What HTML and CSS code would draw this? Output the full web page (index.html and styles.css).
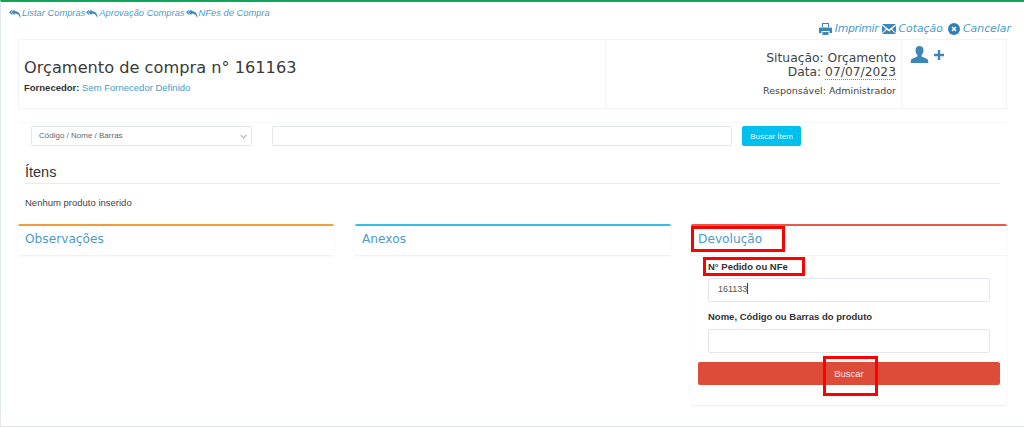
FILE: index.html
```html
<!DOCTYPE html>
<html lang="pt">
<head>
<meta charset="utf-8">
<title>Orçamento de compra</title>
<link rel="stylesheet" href="styles.css">
</head>
<body>
<svg class="defs" width="0" height="0" aria-hidden="true">
  <symbol id="reply" viewBox="0 0 13 10"><path fill="currentColor" d="M3.500 0 0 3.200l3.500 3.200V5L1.900 3.200 3.500 1.500z"/><path fill="currentColor" d="M6 0 2.400 3.200 6 6.400V4.500c3 0 5 1.300 6.500 5 .3-4.500-2-7.200-6.500-7.700z"/></symbol>
</svg>
<div class="page">
  <div class="topbar">
    <nav class="crumbs">
      <a><svg class="ico-reply"><use href="#reply"/></svg>Listar Compras</a>
      <a><svg class="ico-reply"><use href="#reply"/></svg>Aprovação Compras</a>
      <a><svg class="ico-reply"><use href="#reply"/></svg>NFes de Compra</a>
    </nav>
    <div class="actions">
      <a class="print-link"><svg class="ico-act ico-print" viewBox="0 0 13 12"><path fill="currentColor" fill-rule="evenodd" d="M3 0h7v4H9V1H4v3H3zM1 4.500h11a1 1 0 0 1 1 1V10h-2.500V8h-8v2H0V5.500a1 1 0 0 1 1-1z"/><path fill="currentColor" d="M3.500 9h6v3h-6z"/></svg>Imprimir</a>
      <a><svg class="ico-act ico-mail" viewBox="0 0 14 10"><path fill="currentColor" d="M0 0h14L7 5.500zM0 1.500 4 5 0 9zM14 1.500V9l-4-4zM4.800 5.700 7 7.400l2.200-1.700L14 10H0z"/></svg>Cotação</a>
      <a><svg class="ico-act ico-x" viewBox="0 0 12 12"><circle cx="6" cy="6" r="6" fill="#2f7fb5"/><path d="M4 4l4 4M8 4l-4 4" stroke="#fff" stroke-width="1.500"/></svg>Cancelar</a>
    </div>
  </div>

  <section class="head-box">
    <div class="head-main">
      <h1>Orçamento de compra n° 161163</h1>
      <p class="supplier"><b>Fornecedor:</b> <a>Sem Fornecedor Definido</a></p>
    </div>
    <div class="head-status">
      <div class="status-line">Situação: Orçamento</div>
      <div class="status-line">Data: <span class="dotted">07/07/2023</span></div>
      <div class="resp">Responsável: Administrador</div>
    </div>
    <div class="head-user">
      <svg class="ico-user" viewBox="0 0 18 17"><path fill="currentColor" d="M9 0c2.600 0 4 1.900 4 4.300 0 2-.8 3.600-1.800 4.700-.4.500-.3 1.500.4 1.800 2.300.9 5.400 1.800 5.900 3.200.2.800.2 1.800.2 3H.3c0-1.200 0-2.200.2-3 .5-1.400 3.600-2.300 5.900-3.200.7-.3.800-1.300.4-1.800C5.800 7.900 5 6.300 5 4.300 5 1.900 6.400 0 9 0z"/></svg>
      <svg class="ico-plus" viewBox="0 0 10 10"><path fill="currentColor" d="M3.800 0h2.400v3.800H10v2.400H6.200V10H3.800V6.200H0V3.800h3.800z"/></svg>
    </div>
  </section>

  <div class="search-row">
    <div class="select">Código / Nome / Barras<svg class="chev" viewBox="0 0 10 6"><path d="M1 1l4 4 4-4" fill="none" stroke="#777" stroke-width="1.300"/></svg></div>
    <div class="input search-input"></div>
    <button class="btn-info">Buscar Ítem</button>
  </div>

  <section class="items">
    <h2>Ítens</h2>
    <p>Nenhum produto inserido</p>
  </section>

  <div class="panels">
    <section class="panel orange"><h3>Observações</h3></section>
    <section class="panel cyan"><h3>Anexos</h3></section>
    <section class="panel red">
      <h3>Devolução</h3>
      <div class="panel-body">
        <label>N° Pedido ou NFe</label>
        <div class="input field">161133<span class="caret"></span></div>
        <label class="second">Nome, Código ou Barras do produto</label>
        <div class="input field"></div>
        <button class="btn-danger">Buscar</button>
      </div>
    </section>
  </div>

  <i class="mark mark-title"></i>
  <i class="mark mark-label"></i>
  <i class="mark mark-btn"></i>
</div>
</body>
</html>
```

FILE: styles.css
```css
* { box-sizing: border-box; }
html, body { margin: 0; padding: 0; background: #fff; }
body { font-family: "Liberation Sans", Arial, sans-serif; color: #333; }
.defs { position: absolute; }
a { color: #4b9bc9; }

.page {
  position: relative;
  width: 1024px;
  height: 427px;
  overflow: hidden;
  border-top: 2px solid #0ea65a;
  border-left: 1px solid #e3e8ef;
  border-bottom: 1px solid #dfe3ea;
  padding: 0 17px 0 17px;
}

.topbar { height: 37px; position: relative; }
.crumbs {
  position: absolute;
  left: -9px;
  top: 5px;
  display: flex;
  gap: 1px;
  font-size: 9.350px;
  font-style: italic;
  line-height: 13px;
}
.crumbs a { display: flex; align-items: center; }
.ico-reply { width: 12px; height: 10px; margin-right: 1px; color: #3f87b8; }
.actions {
  position: absolute;
  right: -4px;
  top: 19px;
  display: flex;
  gap: 4px;
  font-family: "DejaVu Sans", sans-serif;
  font-size: 10.900px;
  font-style: italic;
  line-height: 16px;
}
.actions a { display: flex; align-items: center; }
.actions .print-link { letter-spacing: -.35px; }
.ico-act { margin-right: 3px; color: #3c86b8; }
.ico-print { width: 13px; height: 12px; }
.ico-mail { width: 14px; height: 10px; margin-right: 2px; }
.ico-x { width: 12px; height: 12px; margin-left: 1px; }

.head-box {
  display: flex;
  height: 70px;
  width: 989px;
  border: 1px solid #f3f4f6;
}
.head-main { width: 587px; padding: 17px 5px 0 5px; border-right: 1px solid #f3f4f6; }
h1 {
  margin: 0;
  font-family: "DejaVu Sans", sans-serif;
  font-size: 16.200px;
  font-weight: 400;
  line-height: 22px;
  color: #3a3a3a;
}
.supplier { margin: 3px 0 0; font-size: 9.500px; line-height: 12px; }
.supplier b { color: #333; }
.head-status {
  width: 296px;
  padding: 12px 5px 0 0;
  border-right: 1px solid #f3f4f6;
  text-align: right;
  font-family: "DejaVu Sans", sans-serif;
  color: #444;
}
.status-line { font-size: 12.300px; line-height: 13.500px; }
.dotted { border-bottom: 1px dotted #4b9bc9; }
.resp { margin-top: 5px; font-size: 9.500px; line-height: 13px; }
.head-user { flex: 1; padding: 6px 0 0 8px; color: #3c86b8; display: flex; align-items: flex-start; gap: 5px; }
.ico-user { width: 19px; height: 17px; }
.ico-plus { width: 10px; height: 10px; margin-top: 4px; }

.search-row {
  margin-top: 13px;
  width: 989px;
  border-top: 1px solid #f6f7f9;
  padding: 3px 0 0 13px;
  display: flex;
  align-items: flex-start;
}
.select, .input {
  height: 20px;
  border: 1px solid #e4e6ef;
  border-radius: 2px;
  background: #fff;
}
.select {
  width: 221px;
  padding-left: 7px;
  font-size: 8px;
  line-height: 17px;
  color: #666;
  position: relative;
}
.chev { position: absolute; right: 4px; top: 7px; width: 7px; height: 5px; }
.search-input { width: 460px; margin-left: 20px; }
.btn-info {
  width: 59px;
  height: 20px;
  margin-left: 10px;
  padding: 0;
  border: 0;
  border-radius: 2px;
  background: #00c0ef;
  color: #e6f7fd;
  font-family: "Liberation Sans", sans-serif;
  font-size: 8px;
}

.items { margin: 16px 0 0 7px; width: 975px; }
h2 {
  margin: 0;
  height: 22px;
  border-bottom: 1px solid #e9ebef;
  font-size: 14.500px;
  font-weight: 400;
  line-height: 20px;
  color: #333;
}
.items p { margin: 13px 0 0; font-size: 9.500px; line-height: 12px; color: #444; }

.panels {
  margin-top: 15px;
  width: 989px;
  display: grid;
  grid-template-columns: 316px 317px 316px;
  column-gap: 20px;
  align-items: start;
}
.panel {
  border-top: 2px solid;
  background: #fff;
  border-radius: 2px;
  box-shadow: 0 1px 2px rgba(0, 0, 0, .08);
}
.orange { border-color: #f39c35; }
.cyan { border-color: #30bfe6; margin-left: 1px; }
.red { border-color: #e8574a; }
h3 {
  margin: 0;
  height: 29px;
  padding: 5px 0 0 7px;
  font-family: "DejaVu Sans", sans-serif;
  font-size: 12.200px;
  font-weight: 400;
  line-height: 16px;
  color: #4b9bc9;
}
.panel-body { border-top: 1px solid #f3f4f6; padding: 4px 7px 20px; }
label {
  display: block;
  margin-left: 10px;
  font-size: 9.500px;
  font-weight: 700;
  line-height: 14px;
  color: #333;
}
label.second { margin-top: 8px; margin-bottom: 5px; }
.field {
  width: 282px;
  height: 24px;
  margin: 4px 0 0 10px;
  padding-left: 9px;
  font-size: 9px;
  line-height: 21px;
  color: #555;
}
label.second + .field { margin-top: 0; }
.caret { display: inline-block; width: 1px; height: 11px; background: #444; vertical-align: -2px; }
.btn-danger {
  display: block;
  width: 302px;
  height: 23px;
  margin-top: 9px;
  padding: 0;
  border: 0;
  border-radius: 2px;
  background: #dd4b39;
  color: #fbe4e0;
  font-family: "Liberation Sans", sans-serif;
  font-size: 9.500px;
}

.mark { position: absolute; display: block; border: 3px solid #f00; }
.mark-title { left: 690px; top: 224px; width: 94px; height: 26px; }
.mark-label { left: 702px; top: 255px; width: 102px; height: 19px; }
.mark-btn { left: 822px; top: 354px; width: 55px; height: 40px; }
```
